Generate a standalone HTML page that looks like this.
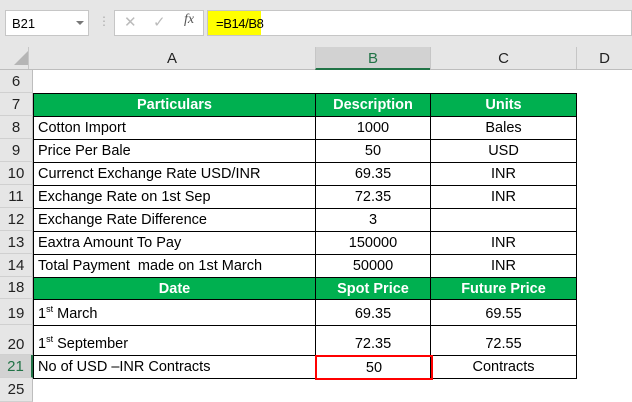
<!DOCTYPE html><html><head><style>
*{margin:0;padding:0;box-sizing:border-box}
body{width:632px;height:402px;overflow:hidden;background:#fff;font-family:"Liberation Sans",sans-serif;position:relative}
.a{position:absolute}
.rh{position:absolute;left:0;width:33px;background:#e6e6e6;border-bottom:1px solid #d0d0d0;border-right:1px solid #bdbdbd;font-size:15px;color:#222;display:flex;align-items:center;justify-content:center}
.c{position:absolute;border:1px solid #000;font-size:14.5px;color:#000;display:flex;align-items:center;white-space:nowrap}
.ctr{justify-content:center}
.l{padding-left:4px}
.g{background:#00b050;color:#fff;font-weight:bold}
.hd{position:absolute;top:47px;height:22px;border-left:1px solid #c6c6c6;text-align:center;font-size:15px;padding-top:3px;color:#222}
sup{font-size:9px;vertical-align:6px;line-height:0}
</style></head><body>
<div class="a" style="left:0;top:0;width:632px;height:47px;background:#e6e6e6"></div>
<div class="a" style="left:5px;top:10px;width:84px;height:26px;background:#fff;border:1px solid #c6c6c6;font-size:13px;padding:5px 0 0 6px">B21</div>
<div class="a" style="left:76px;top:21px;width:0;height:0;border-left:4px solid transparent;border-right:4px solid transparent;border-top:4px solid #777"></div>
<div class="a" style="left:98px;top:14px;color:#aaa;font-size:12px">⋮</div>
<div class="a" style="left:114px;top:10px;width:90px;height:26px;background:#fff;border:1px solid #c6c6c6"></div>
<div class="a" style="left:124px;top:13px;color:#bbb;font-size:15px">✕</div>
<div class="a" style="left:153px;top:13px;color:#bbb;font-size:15px">✓</div>
<div class="a" style="left:184px;top:12px;color:#555;font-size:14px;font-family:'Liberation Serif',serif;font-style:italic">fx</div>
<div class="a" style="left:207px;top:10px;width:425px;height:26px;background:#fff;border:1px solid #c6c6c6"></div>
<div class="a" style="left:208px;top:11px;width:53px;height:24px;background:#ffff00;font-size:13px;padding:5px 0 0 8px;letter-spacing:-0.4px;white-space:nowrap">=B14/B8</div>
<div class="a" style="left:0;top:47px;width:632px;height:23px;background:#e6e6e6;border-bottom:1px solid #bdbdbd"></div>
<div class="a" style="left:14px;top:51px;width:0;height:0;border-left:14px solid transparent;border-bottom:14px solid #b5b5b5"></div>
<div class="hd" style="left:28px;width:287px">A</div>
<div class="hd" style="left:315px;width:115px;height:23px;background:#d2d2d2;border-bottom:2px solid #217346;color:#217346">B</div>
<div class="hd" style="left:430px;width:146px">C</div>
<div class="hd" style="left:576px;width:56px">D</div>

<div class="rh" style="top:70px;height:23px">6</div>
<div class="rh" style="top:93px;height:23px">7</div>
<div class="rh" style="top:116px;height:23px">8</div>
<div class="rh" style="top:139px;height:23px">9</div>
<div class="rh" style="top:162px;height:23px">10</div>
<div class="rh" style="top:185px;height:23px">11</div>
<div class="rh" style="top:208px;height:23px">12</div>
<div class="rh" style="top:231px;height:23px">13</div>
<div class="rh" style="top:254px;height:23px">14</div>
<div class="rh" style="top:277px;height:22px">18</div>
<div class="rh" style="top:299px;height:26px;padding-top:4px">19</div>
<div class="rh" style="top:325px;height:30px;padding-top:10px">20</div>
<div class="rh" style="top:355px;height:23px;border-right:2px solid #217346;background:#d2d2d2;color:#217346">21</div>
<div class="rh" style="top:378px;height:24px">25</div>

<div class="c ctr g" style="left:33px;top:93px;width:283px;height:24px">Particulars</div>
<div class="c ctr g" style="left:315px;top:93px;width:116px;height:24px">Description</div>
<div class="c ctr g" style="left:430px;top:93px;width:147px;height:24px">Units</div>

<div class="c l" style="left:33px;top:116px;width:283px;height:24px">Cotton Import</div><div class="c ctr" style="left:315px;top:116px;width:116px;height:24px">1000</div><div class="c ctr" style="left:430px;top:116px;width:147px;height:24px">Bales</div>
<div class="c l" style="left:33px;top:139px;width:283px;height:24px">Price Per Bale</div><div class="c ctr" style="left:315px;top:139px;width:116px;height:24px">50</div><div class="c ctr" style="left:430px;top:139px;width:147px;height:24px">USD</div>
<div class="c l" style="left:33px;top:162px;width:283px;height:24px">Currenct Exchange Rate USD/INR</div><div class="c ctr" style="left:315px;top:162px;width:116px;height:24px">69.35</div><div class="c ctr" style="left:430px;top:162px;width:147px;height:24px">INR</div>
<div class="c l" style="left:33px;top:185px;width:283px;height:24px">Exchange Rate on 1st Sep</div><div class="c ctr" style="left:315px;top:185px;width:116px;height:24px">72.35</div><div class="c ctr" style="left:430px;top:185px;width:147px;height:24px">INR</div>
<div class="c l" style="left:33px;top:208px;width:283px;height:24px">Exchange Rate Difference</div><div class="c ctr" style="left:315px;top:208px;width:116px;height:24px">3</div><div class="c ctr" style="left:430px;top:208px;width:147px;height:24px"></div>
<div class="c l" style="left:33px;top:231px;width:283px;height:24px">Eaxtra Amount To Pay</div><div class="c ctr" style="left:315px;top:231px;width:116px;height:24px">150000</div><div class="c ctr" style="left:430px;top:231px;width:147px;height:24px">INR</div>
<div class="c l" style="left:33px;top:254px;width:283px;height:24px">Total Payment&nbsp; made on 1st March</div><div class="c ctr" style="left:315px;top:254px;width:116px;height:24px">50000</div><div class="c ctr" style="left:430px;top:254px;width:147px;height:24px">INR</div>

<div class="c ctr g" style="left:33px;top:277px;width:283px;height:23px">Date</div>
<div class="c ctr g" style="left:315px;top:277px;width:116px;height:23px">Spot Price</div>
<div class="c ctr g" style="left:430px;top:277px;width:147px;height:23px">Future Price</div>

<div class="c l" style="left:33px;top:299px;width:283px;height:27px;align-items:flex-end;padding-bottom:3px"><span>1<sup>st</sup> March</span></div><div class="c ctr" style="left:315px;top:299px;width:116px;height:27px;align-items:flex-end;padding-bottom:3px">69.35</div><div class="c ctr" style="left:430px;top:299px;width:147px;height:27px;align-items:flex-end;padding-bottom:3px">69.55</div>
<div class="c l" style="left:33px;top:325px;width:283px;height:31px;align-items:flex-end;padding-bottom:3px"><span>1<sup>st</sup> September</span></div><div class="c ctr" style="left:315px;top:325px;width:116px;height:31px;align-items:flex-end;padding-bottom:3px">72.35</div><div class="c ctr" style="left:430px;top:325px;width:147px;height:31px;align-items:flex-end;padding-bottom:3px">72.55</div>
<div class="c l" style="left:33px;top:355px;width:283px;height:24px">No of USD –INR Contracts</div><div class="c ctr" style="left:430px;top:355px;width:147px;height:24px">Contracts</div>
<div class="c ctr" style="left:315px;top:355px;width:118px;height:25px;border:2px solid #ff0000">50</div>
</body></html>
